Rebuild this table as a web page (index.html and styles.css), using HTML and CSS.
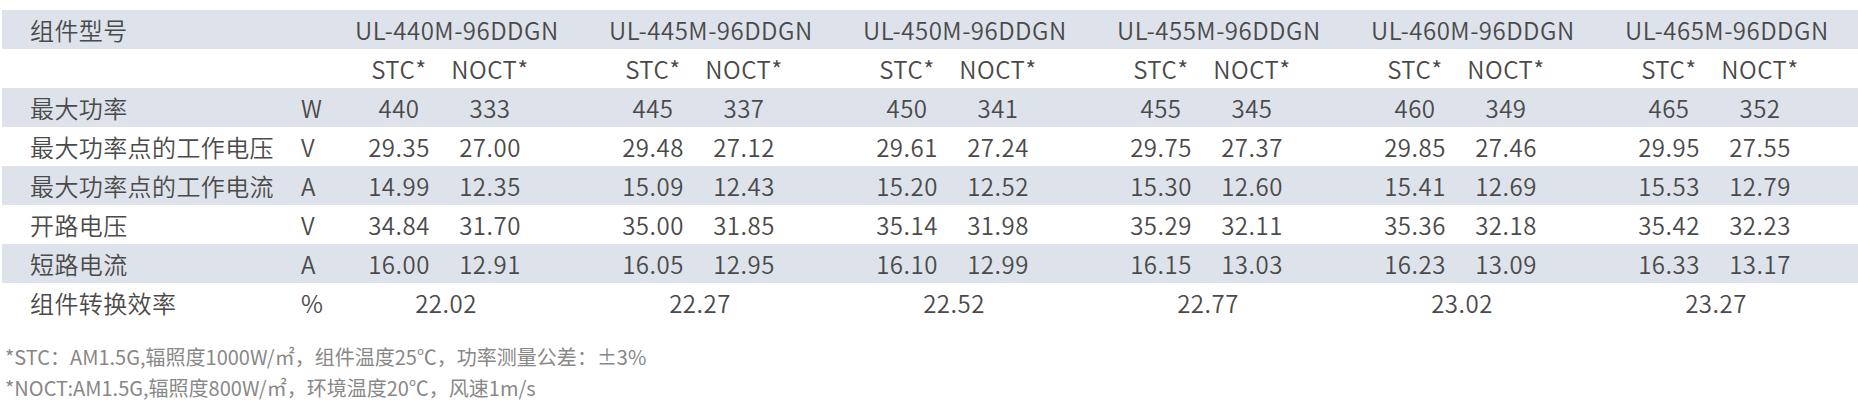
FILE: index.html
```html
<!DOCTYPE html>
<html lang="zh">
<head>
<meta charset="utf-8">
<link rel="stylesheet" href="styles.css">
</head>
<body>
<div class="page">
  <div class="spec">
    <div class="row band">
      <div class="lbl">组件型号</div><div class="unit"></div>
      <div class="model">UL-440M-96DDGN</div>
      <div class="model">UL-445M-96DDGN</div>
      <div class="model">UL-450M-96DDGN</div>
      <div class="model">UL-455M-96DDGN</div>
      <div class="model">UL-460M-96DDGN</div>
      <div class="model">UL-465M-96DDGN</div>
    </div>
    <div class="row">
      <div class="lbl"></div><div class="unit"></div>
      <div class="v s">STC*</div><div class="v n">NOCT*</div>
      <div class="v s">STC*</div><div class="v n">NOCT*</div>
      <div class="v s">STC*</div><div class="v n">NOCT*</div>
      <div class="v s">STC*</div><div class="v n">NOCT*</div>
      <div class="v s">STC*</div><div class="v n">NOCT*</div>
      <div class="v s">STC*</div><div class="v n">NOCT*</div>
    </div>
    <div class="row band">
      <div class="lbl">最大功率</div><div class="unit">W</div>
      <div class="v s">440</div><div class="v n">333</div>
      <div class="v s">445</div><div class="v n">337</div>
      <div class="v s">450</div><div class="v n">341</div>
      <div class="v s">455</div><div class="v n">345</div>
      <div class="v s">460</div><div class="v n">349</div>
      <div class="v s">465</div><div class="v n">352</div>
    </div>
    <div class="row">
      <div class="lbl">最大功率点的工作电压</div><div class="unit">V</div>
      <div class="v s">29.35</div><div class="v n">27.00</div>
      <div class="v s">29.48</div><div class="v n">27.12</div>
      <div class="v s">29.61</div><div class="v n">27.24</div>
      <div class="v s">29.75</div><div class="v n">27.37</div>
      <div class="v s">29.85</div><div class="v n">27.46</div>
      <div class="v s">29.95</div><div class="v n">27.55</div>
    </div>
    <div class="row band">
      <div class="lbl">最大功率点的工作电流</div><div class="unit">A</div>
      <div class="v s">14.99</div><div class="v n">12.35</div>
      <div class="v s">15.09</div><div class="v n">12.43</div>
      <div class="v s">15.20</div><div class="v n">12.52</div>
      <div class="v s">15.30</div><div class="v n">12.60</div>
      <div class="v s">15.41</div><div class="v n">12.69</div>
      <div class="v s">15.53</div><div class="v n">12.79</div>
    </div>
    <div class="row">
      <div class="lbl">开路电压</div><div class="unit">V</div>
      <div class="v s">34.84</div><div class="v n">31.70</div>
      <div class="v s">35.00</div><div class="v n">31.85</div>
      <div class="v s">35.14</div><div class="v n">31.98</div>
      <div class="v s">35.29</div><div class="v n">32.11</div>
      <div class="v s">35.36</div><div class="v n">32.18</div>
      <div class="v s">35.42</div><div class="v n">32.23</div>
    </div>
    <div class="row band">
      <div class="lbl">短路电流</div><div class="unit">A</div>
      <div class="v s">16.00</div><div class="v n">12.91</div>
      <div class="v s">16.05</div><div class="v n">12.95</div>
      <div class="v s">16.10</div><div class="v n">12.99</div>
      <div class="v s">16.15</div><div class="v n">13.03</div>
      <div class="v s">16.23</div><div class="v n">13.09</div>
      <div class="v s">16.33</div><div class="v n">13.17</div>
    </div>
    <div class="row">
      <div class="lbl">组件转换效率</div><div class="unit">%</div>
      <div class="model">22.02</div>
      <div class="model">22.27</div>
      <div class="model">22.52</div>
      <div class="model">22.77</div>
      <div class="model">23.02</div>
      <div class="model">23.27</div>
    </div>
  </div>
  <div class="notes">
    <p>*STC<span class="cc">：</span>AM1.5G,辐照度1000W/㎡，组件温度25℃，功率测量公差<span class="cc">：</span>±3%</p>
    <p>*NOCT:AM1.5G,辐照度800W/㎡，环境温度20℃，风速1m/s</p>
  </div>
</div>
</body>
</html>
```
FILE: styles.css
```css
html, body {
  margin: 0;
  padding: 0;
  background: #ffffff;
}

.page {
  padding: 10px 0 0 2px;
  font-family: "Noto Sans CJK SC", "Noto Sans", sans-serif;
}

.spec {
  display: flex;
  flex-direction: column;
  color: #4a4a4a;
  font-size: 24px;
  font-weight: 350;
}

.row {
  display: grid;
  grid-template-columns: 299px 54px repeat(5, 88px 94px 72px) 88px 94px 1fr;
  height: 39px;
  align-items: center;
  white-space: nowrap;
  line-height: 30px;
}

.band {
  background: #dee3eb;
}

.lbl {
  padding-left: 28px;
  letter-spacing: 0.4px;
}

.unit {
  text-align: left;
}

.v,
.model {
  text-align: center;
  letter-spacing: 0.5px;
}

.row > :nth-child(3) { grid-column: 3; }
.row > :nth-child(5) { grid-column: 6; }
.row > :nth-child(7) { grid-column: 9; }
.row > :nth-child(9) { grid-column: 12; }
.row > :nth-child(11) { grid-column: 15; }
.row > :nth-child(13) { grid-column: 18; }

.row > .model:nth-child(3) { grid-column: 3 / span 2; }
.row > .model:nth-child(4) { grid-column: 6 / span 2; }
.row > .model:nth-child(5) { grid-column: 9 / span 2; }
.row > .model:nth-child(6) { grid-column: 12 / span 2; }
.row > .model:nth-child(7) { grid-column: 15 / span 2; }
.row > .model:nth-child(8) { grid-column: 18 / span 2; }

.notes {
  margin-top: 19px;
  padding-left: 3px;
  color: #888888;
  font-size: 20px;
  font-weight: 400;
}

.notes p {
  margin: 0;
  line-height: 31px;
  white-space: nowrap;
}

.notes .cc {
  font-family: "Noto Sans CJK TC", "Noto Sans CJK SC", sans-serif;
}
```
